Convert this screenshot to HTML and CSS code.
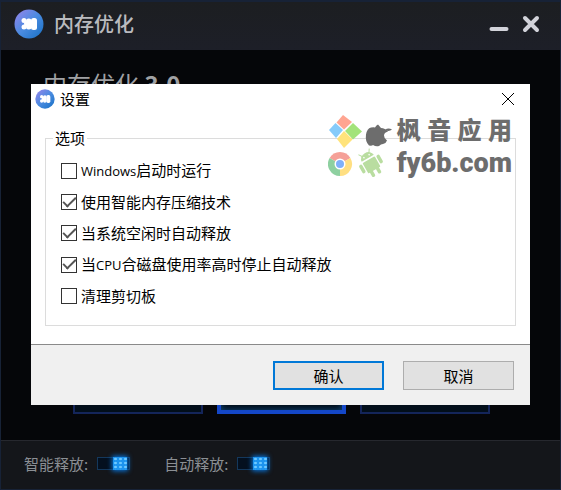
FILE: index.html
```html
<!DOCTYPE html>
<html lang="zh-CN">
<head>
    <meta charset="UTF-8">
    <meta content="width=device-width" name="viewport">
    <title>内存优化</title>
    <link rel="stylesheet" href="styles.css">
</head>
<body>
    <svg class="defs" aria-hidden="true">
        <linearGradient id="blue" x1="0" y1="0" x2="1" y2="1">
            <stop offset="0" stop-color="#9a84ec"/>
            <stop offset=".5" stop-color="#4a8be0"/>
            <stop offset="1" stop-color="#1670c4"/>
        </linearGradient>
        <symbol id="logo" viewBox="0 0 30 30">
            <circle cx="15" cy="15" r="14.500" fill="url(#blue)"/>
            <g fill="#fff">
                <circle cx="10" cy="11.500" r="2.500"/>
                <circle cx="13" cy="14.800" r="3"/>
                <circle cx="10" cy="18" r="2.500"/>
                <rect x="12" y="9.500" width="5.500" height="11" rx="2.500"/>
                <rect x="17" y="9" width="6" height="12" rx="2.500"/>
                <path d="M10 12l2 3-2 3h4v-6z"/>
            </g>
        </symbol>
    </svg>
    <div class="app">
        <header class="header">
            <svg class="logo"><use href="#logo"/></svg>
            <h1>内存优化</h1>
            <button class="win-btn" aria-label="最小化">
                <svg width="20" height="20" viewBox="0 0 20 20"><path d="M2.500 15h15" /></svg>
            </button>
            <button class="win-btn" aria-label="关闭">
                <svg width="20" height="20" viewBox="0 0 20 20"><path d="M4 4l12 12M16 4L4 16" /></svg>
            </button>
        </header>
        <main class="content">
            <h2>内存优化 <b>3.0</b></h2>
            <div class="actions">
                <button class="action" aria-label="智能释放"></button>
                <button class="action active" aria-label="优化"></button>
                <button class="action" aria-label="设置"></button>
            </div>
        </main>
        <footer class="status">
            <label>智能释放: <input type="checkbox" class="switch" checked></label>
            <label>自动释放: <input type="checkbox" class="switch" checked></label>
        </footer>
    </div>

    <div class="dialog" role="dialog" aria-labelledby="dialog-title">
        <div class="dialog-header">
            <svg class="logo small"><use href="#logo"/></svg>
            <span id="dialog-title">设置</span>
            <button class="close" aria-label="关闭">
                <svg width="14" height="14" viewBox="0 0 14 14"><path d="M1 1l12 12M13 1L1 13"/></svg>
            </button>
        </div>
        <fieldset class="options">
            <legend>选项</legend>
            <label><input type="checkbox" class="check"><span><span class="latin">Windows</span>启动时运行</span></label>
            <label><input type="checkbox" class="check" checked>使用智能内存压缩技术</label>
            <label><input type="checkbox" class="check" checked>当系统空闲时自动释放</label>
            <label><input type="checkbox" class="check" checked><span>当<span class="latin">CPU</span>合磁盘使用率高时停止自动释放</span></label>
            <label><input type="checkbox" class="check">清理剪切板</label>
        </fieldset>
        <div class="dialog-footer">
            <button class="btn primary">确认</button>
            <button class="btn">取消</button>
        </div>

        <div class="mark">
            <svg width="66" height="66" viewBox="0 0 66 66">
                <!-- windows -->
                <path d="M15 1l9 7-8 7.500-7.500-7z" fill="#ffa591"/>
                <path d="M7.500 9l7.500 7-7 8-7-8z" fill="#86cbfa"/>
                <path d="M25 9l9 8.500-9 8-8-8.500z" fill="#a3e37a"/>
                <path d="M16 17l8.500 8.500-8.500 8.500-7-9z" fill="#ffe37b"/>
                <!-- apple -->
                <path d="M50 10.500q2 2 3 3.500q4 0 7 3.500q-4 1-4 4q0 3 3 5q-1 3-4 3.500q-2 0-4 2q-3 1-6-1q-1 1-4 .500q-4-4-3-11q1-6 5-7q3-.5 4 0q1-2 3-3z" fill="#6d6d6d"/>
                <path d="M57 16q3-2.500 7-.5q-3 2.500-7 .5z" fill="#6d6d6d"/>
                <!-- chrome -->
                <path d="M12 50L1.600 44A12 12 0 0 1 22.400 44z" fill="#f5a097"/>
                <path d="M12 50L22.400 44A12 12 0 0 1 12 62z" fill="#ffdf82"/>
                <path d="M12 50L12 62A12 12 0 0 1 1.600 44z" fill="#8ed0a0"/>
                <circle cx="12" cy="50" r="5.500" fill="#fff"/>
                <circle cx="12" cy="50" r="4" fill="#7fb0fa"/>
                <!-- android -->
                <g transform="translate(43 50) rotate(-30)" fill="#b9dda0" stroke="#b9dda0" stroke-linecap="round">
                    <path d="M-7-6.500a7 6 0 0 1 14 0z" stroke="none"/>
                    <path d="M-4-11l-2-3M4-11l2-3" stroke-width="1"/>
                    <rect x="-7" y="-5" width="14" height="12" rx="1" stroke="none"/>
                    <path d="M-10-3v6M10-3v6M-3.500 7v4M3.500 7v4" stroke-width="3.500"/>
                    <circle cx="-3" cy="-9" r=".8" fill="#fff" stroke="none"/>
                    <circle cx="3" cy="-9" r=".8" fill="#fff" stroke="none"/>
                </g>
            </svg>
            <div class="mark-text">
                <p class="mark-name">枫音应用</p>
                <p class="mark-site">fy6b.com</p>
            </div>
        </div>
    </div>
</body>
</html>
```

FILE: styles.css
```css
* {
    margin: 0;
    padding: 0;
    box-sizing: border-box;
}
html, body {
    height: 100%;
}
body {
    position: relative;
    background-color: #050609;
    font-family: "Noto Sans CJK SC", sans-serif;
    font-size: 15px;
}
button {
    border: 0 none;
    background: none;
    font: inherit;
}
input {
    appearance: none;
}
svg {
    display: block;
}
.defs {
    position: absolute;
    width: 0;
    height: 0;
}
.app {
    display: flex;
    flex-direction: column;
    min-height: 100%;
    border: 1px solid #172236;
    border-top-width: 2px;
}

.header {
    display: flex;
    align-items: center;
    height: 48px;
    padding: 0 19px 4px 13px;
    background: linear-gradient(#1c1e21, #1d1f28);
}
.header h1 {
    flex: 1;
    margin-left: 10px;
    color: #b9babe;
    font-size: 20px;
    font-weight: 500;
    line-height: 30px;
}
.logo {
    width: 30px;
    height: 30px;
}
.logo.small {
    width: 20px;
    height: 20px;
}
.win-btn {
    margin-left: 12px;
}
.win-btn path {
    stroke: #d2d3da;
    stroke-width: 4;
    stroke-linecap: round;
}

.content {
    display: flex;
    flex: 1;
    flex-direction: column;
    justify-content: space-between;
    padding: 16px 70px 26px 72px;
}
.content h2 {
    margin-left: -30px;
    color: #a0a1a4;
    font-size: 24px;
    font-weight: 400;
    line-height: 36px;
}
.actions {
    display: grid;
    grid-template-columns: repeat(3, 1fr);
    gap: 14px;
}
.action {
    height: 40px;
    border: 2px solid #14255a;
    background-color: #020e1a;
}
.action.active {
    border: 4px solid #1447c8;
    box-shadow: inset 0 0 6px #0d4a80;
}

.status {
    display: flex;
    align-items: center;
    gap: 34px;
    height: 49px;
    padding: 0 23px 3px;
    border-top: 1px solid #26282e;
    background-color: #14161a;
    color: #8b8f94;
}
.status label {
    display: flex;
    align-items: center;
    gap: 9px;
}
.switch {
    display: flex;
    justify-content: flex-end;
    align-items: center;
    width: 33px;
    height: 13px;
    border: 1px solid #14385c;
    background-color: #04101f;
}
.switch:checked:before {
    width: 14px;
    height: 13px;
    margin-right: 2px;
    background: radial-gradient(#6cc8ff 1px, #1c93ee 2px) 0 0 / 5px 4px;
    box-shadow: 0 0 5px 1px #0877df;
    content: "";
}

.dialog {
    position: absolute;
    top: 84px;
    right: 31px;
    left: 31px;
    z-index: 1;
    background-color: #fff;
    color: #000;
}
.dialog-header {
    display: flex;
    align-items: center;
    gap: 5px;
    height: 30px;
    padding: 0 15px 0 4px;
}
.dialog-header span {
    line-height: 20px;
}
.close {
    margin-left: auto;
}
.close path {
    stroke: #000;
    stroke-width: 1;
}
.options {
    display: grid;
    gap: 9px;
    margin: 14px 14px 18px;
    padding: 11px 15px 18px;
    border: 1px solid #dcdcdc;
}
.options legend {
    margin-left: -8px;
    padding: 0 2px;
    line-height: 20px;
}
.options label {
    display: flex;
    align-items: center;
    gap: 4px;
    line-height: 22px;
}
.latin {
    font-family: "Open Sans", sans-serif;
    font-size: 13px;
}
.check {
    display: grid;
    place-items: center;
    width: 16px;
    height: 16px;
    border: 1px solid #333;
    background-color: #fff;
}
.check:checked:before {
    width: 11px;
    height: 5px;
    border: solid #555;
    border-width: 0 0 2px 2px;
    transform: translateY(-2px) rotate(-45deg);
    content: "";
}
.dialog-footer {
    display: flex;
    justify-content: flex-end;
    gap: 19px;
    padding: 16px 16px 15px;
    border-top: 1px solid #8a8a8a;
    background-color: #f0f0f0;
}
.btn {
    width: 111px;
    height: 29px;
    border: 1px solid #adadad;
    background-color: #e1e1e1;
    line-height: 20px;
}
.btn.primary {
    border: 2px solid #0078d7;
}

/* watermark laid over the dialog */
.mark {
    position: absolute;
    top: 30px;
    right: 18px;
    display: flex;
    gap: 3px;
    color: #6d6d6d;
}
.mark-name {
    font-size: 24px;
    font-weight: 900;
    line-height: 30px;
    text-align-last: justify;
    text-justify: inter-character;
}
.mark-site {
    font-family: Roboto, sans-serif;
    font-size: 27px;
    font-weight: 900;
    line-height: 38px;
}
```
